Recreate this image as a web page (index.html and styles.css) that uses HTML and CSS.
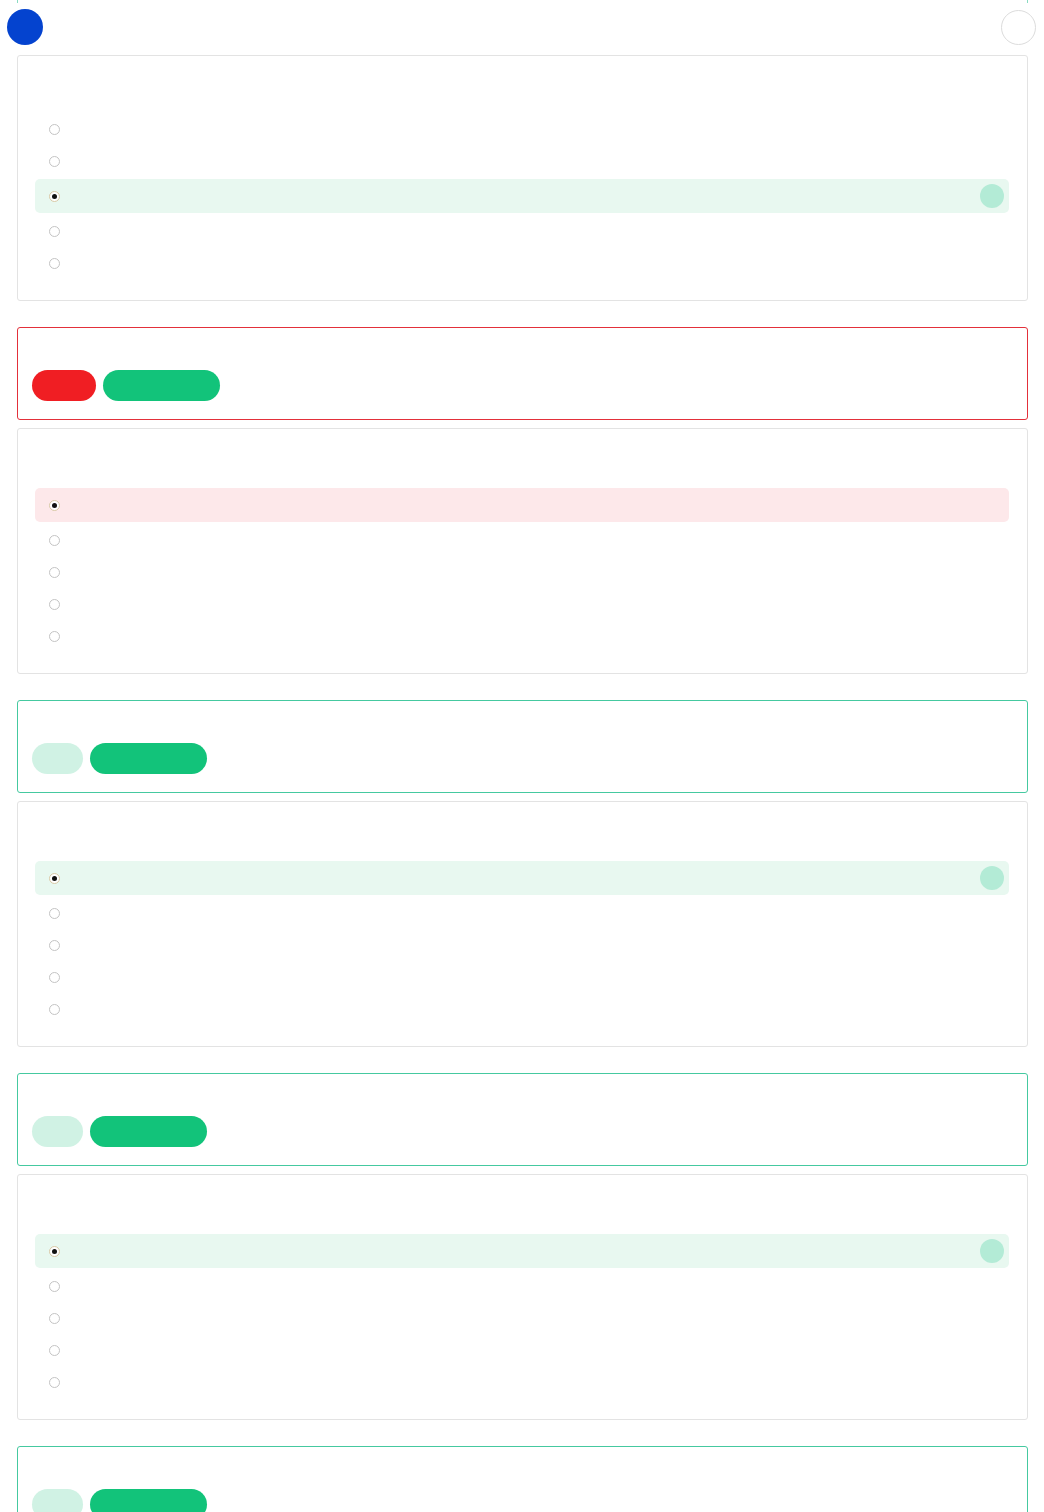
FILE: index.html
```html
<!DOCTYPE html>
<html lang="en">
<head>
<meta charset="utf-8">
<title>Quiz review</title>
<link rel="stylesheet" href="styles.css">
</head>
<body>
<div class="stub"></div>
<header class="topbar">
  <span class="avatar"></span>
  <span class="round-btn"></span>
</header>
<main class="list">
  <section class="q-card">
    <div class="q-head"></div>
    <div class="opt"><span class="radio"></span></div>
    <div class="opt"><span class="radio"></span></div>
    <div class="opt opt-ok"><span class="radio on"></span><span class="mark"></span></div>
    <div class="opt"><span class="radio"></span></div>
    <div class="opt"><span class="radio"></span></div>
  </section>
  <section class="r-card r-bad">
    <span class="pill pill-red"></span>
    <span class="pill pill-green"></span>
  </section>

  <section class="q-card">
    <div class="q-head"></div>
    <div class="opt opt-bad"><span class="radio on"></span></div>
    <div class="opt"><span class="radio"></span></div>
    <div class="opt"><span class="radio"></span></div>
    <div class="opt"><span class="radio"></span></div>
    <div class="opt"><span class="radio"></span></div>
  </section>
  <section class="r-card r-good">
    <span class="pill pill-light"></span>
    <span class="pill pill-green"></span>
  </section>

  <section class="q-card">
    <div class="q-head"></div>
    <div class="opt opt-ok"><span class="radio on"></span><span class="mark"></span></div>
    <div class="opt"><span class="radio"></span></div>
    <div class="opt"><span class="radio"></span></div>
    <div class="opt"><span class="radio"></span></div>
    <div class="opt"><span class="radio"></span></div>
  </section>
  <section class="r-card r-good">
    <span class="pill pill-light"></span>
    <span class="pill pill-green"></span>
  </section>

  <section class="q-card">
    <div class="q-head"></div>
    <div class="opt opt-ok"><span class="radio on"></span><span class="mark"></span></div>
    <div class="opt"><span class="radio"></span></div>
    <div class="opt"><span class="radio"></span></div>
    <div class="opt"><span class="radio"></span></div>
    <div class="opt"><span class="radio"></span></div>
  </section>
  <section class="r-card r-good">
    <span class="pill pill-light"></span>
    <span class="pill pill-green"></span>
  </section>
</main>
</body>
</html>
```

FILE: styles.css
```css
html, body {
  margin: 0;
  padding: 0;
  background: #ffffff;
  font-family: "Liberation Sans", Arial, sans-serif;
}

.stub {
  height: 3px;
  margin: 0 16px 0 17px;
  border-left: 1px solid #3cc49a;
  border-right: 1px solid #3cc49a;
  opacity: 0.6;
}

.topbar {
  display: flex;
  justify-content: space-between;
  align-items: flex-start;
  height: 52px;
  padding: 6px 8px 0 7px;
  box-sizing: border-box;
}

.avatar {
  width: 36px;
  height: 36px;
  border-radius: 50%;
  background: #0443cf;
}

.round-btn {
  width: 33px;
  height: 33px;
  margin-top: 1px;
  border-radius: 50%;
  border: 1px solid #dcdcdc;
  background: #fff;
}

.list {
  padding: 0 16px 40px 17px;
}

.q-card {
  border: 1px solid #e3e3e3;
  border-radius: 3px;
  padding: 0 18px 21px 17px;
  margin-top: 8px;
}

.list > .q-card:first-child {
  margin-top: 0;
}

.q-head {
  height: 57px;
}

.opt {
  display: flex;
  align-items: center;
  height: 32px;
  padding: 0 5px 0 14px;
  border-radius: 5px;
}

.opt-ok {
  background: #e8f8f0;
  height: 34px;
  margin: 2px 0;
}

.opt-bad {
  background: #fde8ea;
  height: 34px;
  margin: 2px 0;
}

.radio {
  width: 9px;
  height: 9px;
  border-radius: 50%;
  border: 1px solid #c4c4c4;
  background: #fff;
  box-sizing: content-box;
  display: flex;
  align-items: center;
  justify-content: center;
}

.radio.on {
  border-color: #d9c9a6;
}

.radio.on::after {
  content: "";
  width: 5px;
  height: 5px;
  border-radius: 50%;
  background: #111;
}

.mark {
  margin-left: auto;
  width: 24px;
  height: 24px;
  border-radius: 50%;
  background: #b3ebd6;
}

.r-card {
  display: flex;
  gap: 7px;
  margin-top: 26px;
  padding: 42px 14px 18px;
  border-radius: 3px;
  border: 1px solid #45c9a0;
}

.r-card.r-bad {
  border-color: #e3303a;
}

.pill {
  height: 31px;
  border-radius: 16px;
}

.pill-red {
  width: 64px;
  background: #f01e23;
}

.pill-light {
  width: 51px;
  background: #d0f2e4;
}

.pill-green {
  width: 117px;
  background: #12c37a;
}
```
